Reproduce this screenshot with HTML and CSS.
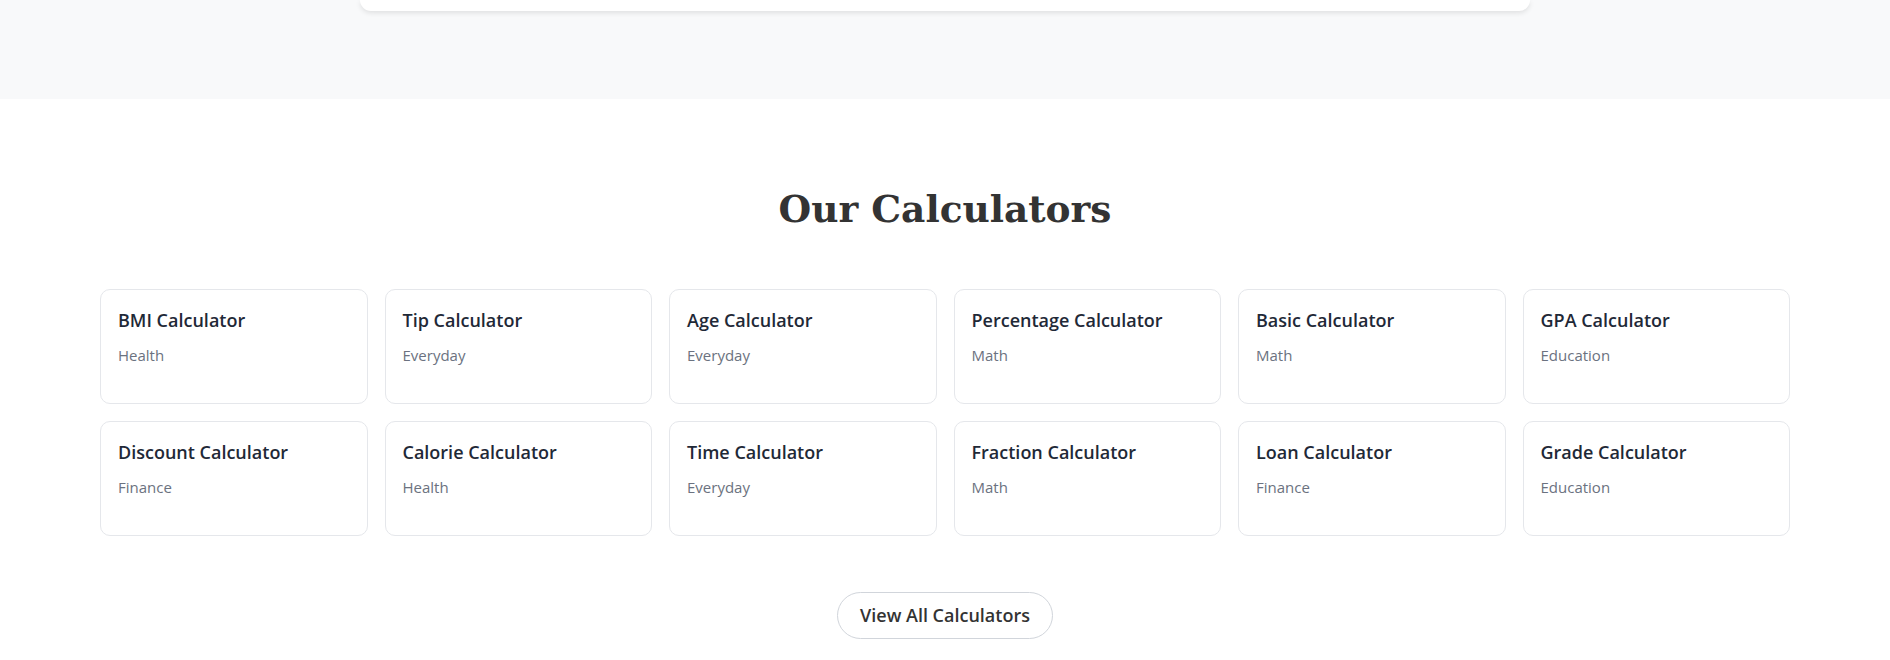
FILE: index.html
```html
<!DOCTYPE html>
<html lang="en">
<head>
    <meta charset="UTF-8">
    <meta name="viewport" content="width=device-width, initial-scale=1.0">
    <title>Calculators</title>
    <link rel="stylesheet" href="styles.css">
</head>
<body>
    <section class="hero">
        <div class="search-card"></div>
    </section>

    <section class="calculators">
        <h2 class="section-title">Our Calculators</h2>
        <div class="calc-grid">
            <a class="calc-card" href="#"><h3 class="calc-name">BMI Calculator</h3><p class="calc-category">Health</p></a>
            <a class="calc-card" href="#"><h3 class="calc-name">Tip Calculator</h3><p class="calc-category">Everyday</p></a>
            <a class="calc-card" href="#"><h3 class="calc-name">Age Calculator</h3><p class="calc-category">Everyday</p></a>
            <a class="calc-card" href="#"><h3 class="calc-name">Percentage Calculator</h3><p class="calc-category">Math</p></a>
            <a class="calc-card" href="#"><h3 class="calc-name">Basic Calculator</h3><p class="calc-category">Math</p></a>
            <a class="calc-card" href="#"><h3 class="calc-name">GPA Calculator</h3><p class="calc-category">Education</p></a>
            <a class="calc-card" href="#"><h3 class="calc-name">Discount Calculator</h3><p class="calc-category">Finance</p></a>
            <a class="calc-card" href="#"><h3 class="calc-name">Calorie Calculator</h3><p class="calc-category">Health</p></a>
            <a class="calc-card" href="#"><h3 class="calc-name">Time Calculator</h3><p class="calc-category">Everyday</p></a>
            <a class="calc-card" href="#"><h3 class="calc-name">Fraction Calculator</h3><p class="calc-category">Math</p></a>
            <a class="calc-card" href="#"><h3 class="calc-name">Loan Calculator</h3><p class="calc-category">Finance</p></a>
            <a class="calc-card" href="#"><h3 class="calc-name">Grade Calculator</h3><p class="calc-category">Education</p></a>
        </div>
        <div class="view-all-wrap">
            <a class="view-all" href="#">View All Calculators</a>
        </div>
    </section>
</body>
</html>
```

FILE: styles.css
```css
* { margin: 0; padding: 0; box-sizing: border-box; }
body {
    font-family: "Open Sans", "Noto Sans", sans-serif;
    background: #fff;
    color: #1f2937;
}
.hero {
    background: #f8f9fa;
    padding-bottom: 88px;
}
.search-card {
    max-width: 1170px;
    height: 11px;
    margin: 0 auto;
    background: #fff;
    border-radius: 0 0 14px 14px;
    box-shadow: 0 2px 5px rgba(0,0,0,0.1);
}
.calculators {
    padding: 88px 0 40px;
}
.section-title {
    font-family: Georgia, "DejaVu Serif", serif;
    font-size: 37.5px;
    font-weight: bold;
    line-height: 1.2;
    color: #333;
    text-align: center;
    margin-bottom: 57px;
}
.calc-grid {
    max-width: 1690px;
    margin: 0 auto;
    display: grid;
    grid-template-columns: repeat(6, 1fr);
    column-gap: 17px;
    row-gap: 17px;
}
.calc-card {
    display: block;
    min-height: 115px;
    padding: 19px 17px 18px;
    background: #fff;
    border: 1px solid #e5e7eb;
    border-radius: 10px;
    text-decoration: none;
}
.calc-name {
    font-size: 18px;
    font-weight: 600;
    line-height: 1.3;
    color: #1f2937;
    margin-bottom: 13px;
}
.calc-category {
    font-size: 15px;
    line-height: 1.4;
    color: #6b7280;
}
.view-all-wrap {
    display: flex;
    justify-content: center;
    margin-top: 56px;
}
.view-all {
    display: inline-block;
    padding: 9px 22px;
    font-size: 18px;
    font-weight: 600;
    line-height: 1.5;
    color: #333;
    background: #fff;
    border: 1px solid #d1d5db;
    border-radius: 999px;
    text-decoration: none;
}
```
